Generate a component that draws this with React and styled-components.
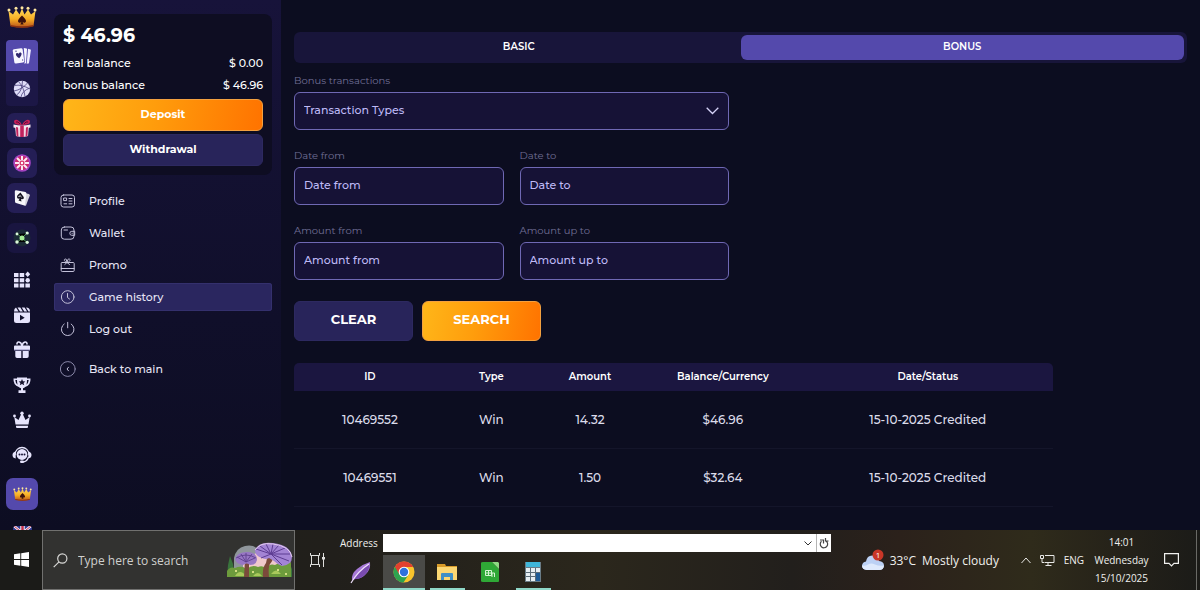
import React from "react";
import styled, { createGlobalStyle, css } from "styled-components";

const PALETTE = {
  page: "#0c0d20",
  rail: "linear-gradient(#17133a, #100f2a 60%, #0d0d22)",
  card: "#0e0d22",
  button: "#28245a",
  accent: "#5449ac",
  field: "#161236",
  fieldBorder: "#6f68b4",
  lilac: "#bfbaf6",
  muted: "#716f96",
  text: "#e6e5f5",
  white: "#ffffff",
};
const FONT = {
  site: 'Montserrat, Inter, "Open Sans", sans-serif',
  system: '"Segoe UI", "Open Sans", "Noto Sans", sans-serif',
};
const ORANGE = "linear-gradient(100deg, #ffb619 0%, #ff9d0c 45%, #ff7300 100%)";

const GlobalStyle = createGlobalStyle`
  * {
    box-sizing: border-box;
  }
  body {
    margin: 0;
    background: ${PALETTE.page};
    font-family: ${FONT.site};
  }
  button, input, select {
    font-family: inherit;
    margin: 0;
  }
  button {
    cursor: pointer;
  }
`;

const ScreenEl = styled.div`
  display: flex;
  flex-direction: column;
  height: 100vh;
`;
const SiteEl = styled.div`
  flex: 1;
  min-height: 0;
  display: flex;
  overflow: hidden;
  color: ${PALETTE.text};
`;

/* Icon rail */
const RailEl = styled.nav`
  flex: none;
  width: 44px;
  padding-top: 6px;
  display: flex;
  flex-direction: column;
  align-items: center;
  background: ${PALETTE.rail};
`;
const LogoEl = styled.a`
  display: flex;
  height: 22px;
  margin-bottom: 12px;
`;
const RailGroupEl = styled.div`
  display: flex;
  flex-direction: column;
  flex: none;
  border-radius: 4px;
  overflow: hidden;
  background: #1c1746;
  margin-bottom: 7px;
`;
const GroupLinkEl = styled.a`
  display: flex;
  align-items: center;
  justify-content: center;
  width: 32px;
  height: ${(props) => (props.$active ? 31 : 35)}px;
  background: ${(props) => (props.$active ? PALETTE.accent : "transparent")};
`;
const TileStackEl = styled.div`
  display: flex;
  flex-direction: column;
  flex: none;
  gap: 5px;
  margin-bottom: 10px;
`;
const TileEl = styled.a`
  flex: none;
  display: flex;
  align-items: center;
  justify-content: center;
  width: ${(props) => (props.$accent ? 32 : 30)}px;
  height: ${(props) => (props.$accent ? 32 : 30)}px;
  border-radius: 7px;
  background: ${(props) =>
    props.$accent ? PALETTE.accent : props.$dim ? "#191540" : "#241e55"};
`;
const RailLinksEl = styled.div`
  flex: none;
  display: flex;
  flex-direction: column;
  padding-bottom: 6px;
  margin-top: -1px;
`;
const RailLinkEl = styled.a`
  display: flex;
  align-items: center;
  justify-content: center;
  width: 32px;
  height: 35px;
`;
const LanguageEl = styled.a`
  flex: none;
  display: flex;
  margin-top: 16px;
`;

/* Account panel */
const PanelEl = styled.aside`
  flex: none;
  width: 237px;
  padding: 14px 9px 0 10px;
  background: ${PALETTE.rail};
`;
const BalanceCardEl = styled.section`
  padding: 10px 9px 9px;
  border-radius: 8px;
  background: ${PALETTE.card};
  color: ${PALETTE.white};
`;
const BalanceTotalEl = styled.div`
  font-size: 19px;
  line-height: 24px;
  font-weight: 700;
  margin-bottom: 4px;
`;
const BalanceRowEl = styled.div`
  display: flex;
  justify-content: space-between;
  font-size: 11px;
  line-height: 22px;
  font-weight: 500;
`;
const CardButtonEl = styled.button`
  display: block;
  width: 100%;
  height: 32px;
  margin-top: 3px;
  padding: 0 0 2px;
  border: 1px solid ${(props) => (props.$primary ? "#f3a040" : "#2d2960")};
  border-radius: 6px;
  background: ${(props) => (props.$primary ? ORANGE : PALETTE.button)};
  color: ${PALETTE.white};
  font-size: 11px;
  font-weight: 700;
`;
const MenuEl = styled.nav`
  display: flex;
  flex-direction: column;
  gap: 4px;
  padding-top: 12px;
`;
const MenuLinkEl = styled.a`
  display: flex;
  align-items: center;
  gap: 13px;
  height: 28px;
  padding: 0 6px;
  border-radius: 3px;
  color: ${PALETTE.text};
  font-size: 11px;
  font-weight: 500;
  text-decoration: none;
  ${(props) =>
    props.$active &&
    css`
      background: #2a265f;
      box-shadow: inset 0 0 0 1px #34306d;
    `}
  ${(props) => props.$spaced && "margin-top: 8px;"}
`;

/* Main column */
const MainEl = styled.main`
  flex: 1;
  min-width: 0;
  padding: 32px 13px 0;
  background: ${PALETTE.page};
`;
const TabsEl = styled.div`
  display: flex;
  height: 31px;
  padding: 3px;
  border-radius: 6px;
  background: #18153a;
  margin-bottom: 11px;
`;
const TabEl = styled.button`
  flex: 1;
  padding: 0 0 2px;
  border: 0;
  border-radius: 6px;
  background: ${(props) => (props.$active ? PALETTE.accent : "transparent")};
  color: ${PALETTE.white};
  font-size: 10px;
  font-weight: 600;
`;
const FormEl = styled.form`
  margin-bottom: 22px;
`;
const FieldGridEl = styled.div`
  display: grid;
  grid-template-columns: 1fr 1fr;
  gap: 19px 16px;
  max-width: 435px;
  margin-bottom: 21px;
`;
const FieldEl = styled.div`
  display: flex;
  flex-direction: column;
  gap: 4px;
  grid-column: ${(props) => (props.$wide ? "1 / -1" : "auto")};
`;
const LabelEl = styled.label`
  color: ${PALETTE.muted};
  font-size: 10px;
  line-height: 14px;
`;
const controlStyle = css`
  width: 100%;
  height: 38px;
  padding: 0 9px 2px;
  border: 1px solid ${PALETTE.fieldBorder};
  border-radius: 6px;
  background: ${PALETTE.field};
  color: ${PALETTE.lilac};
  font-size: 11px;
  font-weight: 500;
  outline: none;
`;
const InputEl = styled.input`
  ${controlStyle}
  &::placeholder {
    color: ${PALETTE.lilac};
    opacity: 1;
  }
`;
const SelectWrapEl = styled.div`
  display: grid;
  align-items: center;

  > * {
    grid-area: 1 / 1;
  }
  > svg {
    justify-self: end;
    margin-right: 10px;
    pointer-events: none;
  }
`;
const SelectEl = styled.select`
  ${controlStyle}
  appearance: none;
`;
const ActionsEl = styled.div`
  display: flex;
  gap: 9px;
`;
const ActionEl = styled.button`
  width: 119px;
  height: 40px;
  padding: 0 0 4px;
  border: 1px solid ${(props) => (props.$primary ? "#f3a040" : "#2d2960")};
  border-radius: 6px;
  background: ${(props) => (props.$primary ? ORANGE : PALETTE.button)};
  color: ${PALETTE.white};
  font-size: 13px;
  font-weight: 700;
`;
const TableEl = styled.table`
  width: 85%;
  table-layout: fixed;
  border-spacing: 0;
  text-align: center;

  th {
    height: 28px;
    padding: 0 0 2px;
    background: #1b1640;
    font-size: 10px;
    font-weight: 600;
    color: ${PALETTE.white};
  }
  th:first-child {
    border-top-left-radius: 5px;
  }
  th:last-child {
    border-top-right-radius: 5px;
  }
  td {
    height: 58px;
    padding: 0;
    border-bottom: 1px solid #14152a;
    font-size: 12px;
    font-weight: 500;
    color: #dcdcea;
  }
`;

/* Desktop taskbar */
const TaskbarEl = styled.footer`
  flex: none;
  display: flex;
  height: 60px;
  background: linear-gradient(
    90deg,
    #1f1f1b 0%,
    #211f1b 28%,
    #2b271c 50%,
    #221f1c 66%,
    #2b211b 75%,
    #2f2b1b 86%,
    #242119 94%,
    #1b1b18 100%
  );
  color: #f0f0ee;
  font-family: ${FONT.system};
`;
const StartEl = styled.button`
  flex: none;
  width: 42px;
  padding: 3px 0 0;
  border: 0;
  background: #1b1b18;
`;
const SearchEl = styled.div`
  flex: none;
  display: flex;
  align-items: center;
  width: 253px;
  padding-left: 10px;
  border: 1px solid #71716f;
  background: #323230;
`;
const SearchInputEl = styled.input`
  flex: 1;
  min-width: 0;
  padding: 0 0 0 10px;
  border: 0;
  outline: none;
  background: transparent;
  color: #d0d0ce;
  font-size: 12px;

  &::placeholder {
    color: #d0d0ce;
    opacity: 1;
  }
`;
const TaskButtonEl = styled.button`
  flex: none;
  display: flex;
  align-items: center;
  justify-content: center;
  width: 45px;
  padding: 0;
  border: 0;
  background: transparent;
`;
const ToolbarsEl = styled.div`
  flex: 1;
  min-width: 0;
  display: flex;
  flex-direction: column;
  padding-top: 4px;
`;
const AddressRowEl = styled.div`
  display: flex;
  align-items: center;
  height: 18px;
  margin-bottom: 3px;
`;
const AddressLabelEl = styled.label`
  flex: none;
  width: 43px;
  font-size: 10px;
  line-height: 18px;
`;
const AddressBoxEl = styled.div`
  flex: 1;
  display: flex;
  height: 18px;
  background: ${PALETTE.white};

  input {
    flex: 1;
    min-width: 0;
    border: 0;
    padding: 0 4px;
    outline: none;
    background: transparent;
  }
  button {
    display: flex;
    align-items: center;
    justify-content: center;
    width: 16px;
    padding: 0;
    border: 0;
    background: transparent;
  }
  button:last-child {
    width: 15px;
    border-left: 1px solid #b5b5b5;
  }
`;
const AppsEl = styled.div`
  flex: 1;
  display: flex;
  gap: 1px;
`;
const AppButtonEl = styled.button`
  display: flex;
  flex-direction: column;
  align-items: center;
  justify-content: space-between;
  width: 42px;
  padding: 5px 0 0;
  border: 0;
  background: ${(props) => (props.$active ? "#4a4a47" : "transparent")};

  &::after {
    content: "";
    width: ${(props) => (props.$active ? 42 : 35)}px;
    height: 2px;
    background: ${(props) => (props.$running ? "#8fd8c8" : "transparent")};
  }
`;
const TrayEl = styled.div`
  flex: none;
  display: flex;
  align-items: center;
  padding-left: 31px;
  border-right: 1px solid #6a6a66;
  margin-right: 3px;
`;
const WeatherEl = styled.div`
  display: flex;
  align-items: center;
  gap: 6px;
  width: 159px;
  font-size: 12px;
  white-space: nowrap;
`;
const TrayIconsEl = styled.div`
  display: flex;
  align-items: center;
  gap: 9px;
  font-size: 10px;
`;
const ClockEl = styled.time`
  width: 75px;
  font-size: 10px;
  line-height: 18px;
  text-align: center;
`;
const NoticeEl = styled.div`
  display: flex;
  justify-content: center;
  width: 24px;
  margin-right: 13px;
`;

/* Drawings */
const CrownIcon = ({ width, height }) => (
  <svg width={width} height={height} viewBox="0 0 30 22" aria-hidden="true">
    <defs>
      <linearGradient id="gold" x1="0" y1="0" x2="0" y2="1">
        <stop offset="0" stopColor="#ffd95c" />
        <stop offset="0.55" stopColor="#f7ae24" />
        <stop offset="1" stopColor="#b9521a" />
      </linearGradient>
    </defs>
    <path
      d="M3.500 20 1.500 5 6 8.500l3-5 3.500 5 2.500-6 2.500 6 3.500-5 3 5L28.500 5l-2 15q-11.500 3-23 0Z"
      fill="url(#gold)"
    />
    <g fill="#ffe7a0">
      <circle cx="2" cy="4" r="1.500" />
      <circle cx="9" cy="2.200" r="1.500" />
      <circle cx="15" cy="1.800" r="1.500" />
      <circle cx="21" cy="2.200" r="1.500" />
      <circle cx="28" cy="4" r="1.500" />
    </g>
    <path d="M3.500 19q11.500 2.500 23 0v1.500q-11.500 2.500-23 0Z" fill="#8a3213" />
    <path
      d="M15 9.500q4 3.500 4 5.500c0 2-2.500 2.500-3.400.8l1 2.700h-3.200l1-2.700c-.9 1.700-3.400 1.200-3.400-.8q0-2 4-5.500Z"
      fill="#3c120d"
    />
  </svg>
);

const CardsIcon = () => (
  <svg width="20" height="20" viewBox="0 0 20 20" aria-hidden="true">
    <rect x="1.500" y="2.500" width="10" height="14.500" rx="1.500" fill="#f7f6ff" transform="rotate(-8 7 10)" />
    <path d="m11.800 2 2.700.4q.6.2.5.8l-1 14-2 .3q1-1 .8-2Z" fill="#f7f6ff" />
    <path d="m16 2.800 2.500.6q.5.200.4.8L17 17q-.2.600-.8.600l-1.500.1Z" fill="#f0eeff" />
    <path d="M7.200 12.300C1.500 8.800 4.600 5.600 6.700 7.800c1.300-2.700 5.500-.6.500 4.500Z" fill="#30276e" />
    <path d="M3.300 5.200h1.400M10 14h1.200" stroke="#3c3483" />
  </svg>
);

const BallIcon = () => (
  <svg width="18" height="18" viewBox="0 0 18 18" aria-hidden="true">
    <circle cx="9" cy="9" r="8.200" fill="#dfddf8" />
    <g fill="none" stroke="#4c447f" strokeWidth="0.800">
      <path d="M1 11Q9 9.500 14.500 3M5.500 1.500q5.500 6 6.500 15M1.800 5.500Q8 4 17 9M3.500 15Q9 12 9.500 1M8 17q1-6 8.800-9" />
    </g>
  </svg>
);

const PresentIcon = () => (
  <svg width="20" height="20" viewBox="0 0 20 20" aria-hidden="true">
    <path d="M3 8h14l-1 10q-6 2-12 0Z" fill="#f1d5e3" />
    <path d="M1.500 6.500q8.500 2 17 0v3q-8.500 2-17 0Z" fill="#f7e6f0" />
    <path d="M8.200 7.500h3.600v11.400H8.200ZM4 9l2 .4.400 9-1.800-.4ZM16 9l-2 .4-.4 9 1.800-.4Z" fill="#c2225d" />
    <path d="M10 7C7 1 2 .5 2 4q0 3 8 3Zm0 0c3-6 8-6.500 8-3q0 3-8 3Z" fill="#c51f58" />
    <path d="M4 4q2-1 4 2M16 4q-2-1-4 2" stroke="#5c0f3a" fill="none" />
  </svg>
);

const WheelIcon = () => (
  <svg width="18" height="18" viewBox="0 0 18 18" aria-hidden="true">
    <circle cx="9" cy="9" r="8.800" fill="#a545c4" />
    <circle cx="9" cy="9" r="7.200" fill="#c92a6c" />
    <g stroke="#fde8f2" strokeWidth="2">
      <path d="M9 2v14M2 9h14M4 4l10 10M14 4 4 14" />
    </g>
    <circle cx="9" cy="9" r="2.500" fill="#d9346a" />
    <circle cx="9" cy="9" r="1.200" fill="#fff" />
  </svg>
);

const SpadeCardIcon = () => (
  <svg width="18" height="18" viewBox="0 0 18 18" aria-hidden="true">
    <path d="m6 3 10 2q1 .5.800 1.500L13 16.500q-1 .5-2 0Z" fill="#d5d4de" />
    <path d="M3 1.200 12.500 3q1 .5 1 1.500L12 15.500q-.5 1-1.500.8L3 14q-1-.5-1-1.500l-.2-10q.2-1.200 1.200-1.300Z" fill="#f8f8fb" />
    <path d="M7.500 3.500 10.700 8q.6 2.300-1.800 2.200L8 10l.5 2.500-3-.9 1.200-2q-3 .4-2.700-1.800Q4.200 6 5.500 5.300Z" fill="#171522" />
    <path d="M5.500 7.500q2-1.500 3 .5" stroke="#f8f8fb" fill="none" />
  </svg>
);

const NetworkNodesIcon = () => (
  <svg width="18" height="18" viewBox="0 0 18 18" aria-hidden="true">
    <circle cx="9" cy="9" r="8.500" fill="#1b2a36" />
    <path d="M4.500 5 9 9l4.500-4.500M4.500 13 9 9l4.500 4" stroke="#4c9a58" />
    <circle cx="9" cy="9" r="2.500" fill="#a5ef96" />
    <g fill="#dcf8da">
      <circle cx="4" cy="5" r="1.400" />
      <circle cx="14.200" cy="4" r="1.600" />
      <circle cx="4" cy="13" r="1.700" />
      <circle cx="14.200" cy="13.300" r="1.600" />
    </g>
  </svg>
);

const RailIcon = ({ children }) => (
  <svg width="20" height="20" viewBox="0 0 20 20" fill="#e6e4fc" aria-hidden="true">
    {children}
  </svg>
);

const GridIcon = () => (
  <RailIcon>
    <path d="M2 3h4.500v4H2zM7.700 3h4.500v4H7.700zM2 8.200h4.500v4H2zM7.700 8.200h4.500v4H7.700zM2 13.400h4.500v4H2zM7.700 13.400h4.500v4H7.700zM13.400 13.400h4.500v4h-4.500zM15.700 1.500l2.500 2.800-2.500 2.800-2.500-2.800z" />
    <circle cx="15.700" cy="10.200" r="2.200" />
  </RailIcon>
);

const ClapperIcon = () => (
  <RailIcon>
    <path
      fillRule="evenodd"
      d="M2 7.500h16v8q0 2.500-2.500 2.500h-11Q2 18 2 15.500Zm6 2.300v5.700l4.700-2.800Z"
    />
    <path d="M2 6.500q0-3 2-3.900l2.500 3.900ZM5.500 2.500h2.800l2.500 4H8ZM9.800 2.500h2.800l2.500 4h-2.800ZM14 2.500q4 0 4 4h-1.500Z" />
  </RailIcon>
);

const GiftIcon = () => (
  <RailIcon>
    <path d="M3 5.500h14q1 0 1 1V10H2V6.500q0-1 1-1ZM3.300 11h6v7H5q-1.700 0-1.700-1.700ZM10.700 11h6v5.300q0 1.700-1.700 1.700h-4.300Z" />
    <path
      d="M10 6C9 1 4.500 1 5 4.500M10 6C11 1 15.500 1 15 4.500"
      fill="none"
      stroke="#e6e4fc"
      strokeWidth="1.600"
    />
    <path d="M2 9.500h16v1H2Z" fill="#8d89ba" />
  </RailIcon>
);

const TrophyIcon = () => (
  <RailIcon>
    <path
      fillRule="evenodd"
      d="M5 2.500h10v1h3.500q.5 6.500-5.300 8.500-.8 1-2.200 1.300v2h2.500V18h-7v-2.700H9v-2q-1.400-.3-2.200-1.300Q1 10 1.500 3.500H5ZM5 5H3.300q.2 3.500 2.400 4.700Q5 8 5 5Zm10 0q0 3-.7 4.700Q16.500 8.500 16.700 5Z"
    />
    <path d="m10 4 1 2.200 2.400.2-1.800 1.500.6 2.400L10 9l-2.200 1.300.6-2.400-1.800-1.500L9 6.200Z" fill="#17142f" />
  </RailIcon>
);

const VipIcon = () => (
  <RailIcon>
    <path d="M3.500 14.500 2.300 7l4.200 3L9.300 4h1.400l2.800 6 4.200-3-1.200 7.500ZM4 15.700h12v1q0 1.300-1 1.300H5q-1 0-1-1.300Z" />
    <circle cx="2.500" cy="6" r="1.400" />
    <circle cx="10" cy="3.200" r="1.700" />
    <circle cx="17.500" cy="6" r="1.400" />
  </RailIcon>
);

const SupportIcon = () => (
  <RailIcon>
    <circle cx="10" cy="9.500" r="5.400" />
    <path
      d="M3 10C3 0 17 0 17 10M16.500 12q-1.500 5-6 5"
      fill="none"
      stroke="#e6e4fc"
      strokeWidth="1.300"
    />
    <path d="M3.700 6.500v7Q.5 13 .5 10t3.200-3.500ZM16.300 6.500v7q3.200-.5 3.200-3.500t-3.200-3.500Z" />
    <rect x="8" y="15.500" width="4" height="2.500" rx="1.200" />
    <g fill="#1a1738">
      <circle cx="7.500" cy="9.500" r="1" />
      <circle cx="10" cy="9.500" r="1" />
      <circle cx="12.500" cy="9.500" r="1" />
    </g>
  </RailIcon>
);

const FlagIcon = () => (
  <svg width="19" height="14" viewBox="0 0 19 14" aria-hidden="true">
    <clipPath id="flag">
      <rect width="19" height="14" rx="3" />
    </clipPath>
    <g clipPath="url(#flag)">
      <rect width="19" height="14" fill="#303a8f" />
      <path d="m1 0 17 14M18 0 1 14" stroke="#f2edf8" strokeWidth="2.600" />
      <path d="m1 0 17 14M18 0 1 14" stroke="#c5304d" />
      <path d="M9.500 0v14M0 7h19" stroke="#f2edf8" strokeWidth="4.500" />
      <path d="M9.500 0v14M0 7h19" stroke="#c5304d" strokeWidth="2.500" />
    </g>
  </svg>
);

const MenuIcon = ({ children }) => (
  <svg
    width="16"
    height="16"
    viewBox="0 0 16 16"
    fill="none"
    stroke="#c3c1d9"
    strokeLinecap="round"
    strokeLinejoin="round"
    aria-hidden="true"
  >
    {children}
  </svg>
);

const ProfileIcon = () => (
  <MenuIcon>
    <rect x="1" y="2" width="13.500" height="12" rx="2.500" />
    <rect x="4" y="5" width="2.600" height="2.600" />
    <path d="M9 5.500h3M9 8h3M4 10.800h2.700M9 10.800h3" />
  </MenuIcon>
);

const WalletIcon = () => (
  <MenuIcon>
    <rect x="1.300" y="2" width="12.700" height="12.200" rx="3" />
    <path d="M4 5h3.500M14.300 6.300h-2.500q-2 0-2 2t2 2h2.500ZM12 8.300h.3" />
  </MenuIcon>
);

const PromoIcon = () => (
  <MenuIcon>
    <rect x="1.200" y="5.500" width="13" height="9" rx="1" />
    <path d="M1.200 11.500h13M7 5.500 4.800 7.500M7 5.500l2.500 2M7 5.500C3 4.500 4 1 6.300 2.300L7 5.500l1-3.200c2.300-1.300 3.800 2.200-1 3.200" />
  </MenuIcon>
);

const HistoryIcon = () => (
  <MenuIcon>
    <circle cx="7.700" cy="8" r="6.300" />
    <path d="M7.500 4.500v4l2 1.500" />
  </MenuIcon>
);

const LogoutIcon = () => (
  <MenuIcon>
    <path d="M4.200 3a6.300 6.300 0 1 0 7 0M7.700 1.300v5.500" />
  </MenuIcon>
);

const BackIcon = () => (
  <MenuIcon>
    <circle cx="7.800" cy="8" r="7.400" stroke="#8987a8" />
    <path d="M8.500 6.200 7 8l1.500 1.800" />
  </MenuIcon>
);

const ChevronIcon = () => (
  <svg width="13" height="8" viewBox="0 0 13 8" fill="none" stroke="#d5d2f7" strokeWidth="1.300" aria-hidden="true">
    <path d="m.7.8 5.800 5.700L12.300.8" />
  </svg>
);

const WindowsIcon = () => (
  <svg width="15" height="15" viewBox="0 0 15 15" fill="#fff" aria-hidden="true">
    <path d="M0 2.200 6.300 1.300V7H0ZM7.200 1.200 15 0v7H7.200ZM0 8h6.300v5.700L0 12.800ZM7.200 8H15v7l-7.800-1.200Z" />
  </svg>
);

const MagnifierIcon = () => (
  <svg width="15" height="15" viewBox="0 0 15 15" fill="none" stroke="#d8d8d6" strokeWidth="1.200" aria-hidden="true">
    <circle cx="9.300" cy="5.500" r="4.600" />
    <path d="M6 8.900.7 14.200" />
  </svg>
);

const MushroomsIcon = () => (
  <svg width="67" height="36" viewBox="0 0 67 36" aria-hidden="true">
    <path d="M7 32V16Q9 6 18 4q10-2 14 5l-3 12-14 11Z" fill="#8f969b" />
    <path d="M16 34V22q10-12 22-14l24 8q4 10 0 18Z" fill="#efc9cc" />
    <path d="m0 35 1-12 2-9 3 8 2 13ZM60 35l1-16 4 8v8Z" fill="#39733c" />
    <path d="M0 35v-6q3-5 8-3 4-2 8-1l4 2q5-5 11-2 4-2 8 1 4-5 9-3 4-3 8-1 4-4 8-1v14Z" fill="#6d9b3c" />
    <path d="M8 34q5-8 11 0ZM44 32q5-7 10 0ZM26 34q5-6 9 0Z" fill="#a9c95b" />
    <path d="M18 18h4v17h-5ZM41 12h6q0 5-4 10-2 3-1 13h-6q-1-9 3-14Z" fill="#7b4a3b" />
    <path d="M8 17Q10 10 20 10t10 8q-1 5-7 5-3-3-7 0-7-1-8-6Z" fill="#9877c4" />
    <path d="M9 16q10-6 20 0M19 20l-9-5m9 5-5-8m5 8 0-9m0 9 6-8m-6 8 9-4" fill="none" stroke="#5f3f8d" strokeWidth="0.900" />
    <path d="M28 8Q32-1 46 1q18 2 19 14 0 8-10 9-4-1-8-5l-5-3q-3 2-7 0-7-2-7-8Z" fill="#a384d4" />
    <path d="m44 12-15-5m15 5L33 4m11 8-5-10m5 10 2-10m-2 10 8-9m-8 9 14-6m-14 6 19 0m-19 0 18 7m-18-7 11 11m-11-11-10 4" stroke="#5d3c92" />
    <path d="M28 8q5-8 18-6 17 2 19 13" fill="none" stroke="#e2c9ec" />
    <g fill="#f6f29a">
      <circle cx="9" cy="29" r="1" />
      <circle cx="26" cy="30" r="1" />
      <circle cx="51" cy="28" r="1" />
      <circle cx="59" cy="32" r="1" />
    </g>
  </svg>
);

const TaskViewIcon = () => (
  <svg width="16" height="14" viewBox="0 0 16 14" fill="none" stroke="#dededc" aria-hidden="true">
    <path d="M.5 0v2.500h9V0M.5 14v-2.500h9V14M1.500 2.500v9M8.500 2.500v9M13.500 0v14" />
    <rect x="12" y="4" width="3" height="2.500" fill="#dededc" stroke="none" />
  </svg>
);

const FeatherIcon = () => (
  <svg width="22" height="24" viewBox="0 0 22 24" aria-hidden="true">
    <path d="M2 20Q1 14 7 9t13-7q1 8-5 13-4 4-10 4Z" fill="#a678d6" />
    <path d="M4 20Q9 11 19.500 4q0 7-5 11-4 4-9 4Z" fill="#7a4bb0" />
    <path d="M1 23Q8 11 19 4" stroke="#efe0fb" fill="none" strokeWidth="1.200" />
  </svg>
);

const ChromeIcon = () => (
  <svg width="22" height="24" viewBox="0 0 22 24" aria-hidden="true">
    <circle cx="11" cy="12" r="10.500" fill="#f8c32c" />
    <path d="M11 12 1.900 6.700A10.500 10.500 0 0 0 10.500 22.500L15.600 14.600Z" fill="#2ea44f" />
    <path d="M1.900 6.700A10.500 10.500 0 0 1 20.200 6.900H11L6.400 14.600Z" fill="#e2402f" />
    <circle cx="11" cy="12" r="5.300" fill="#fff" />
    <circle cx="11" cy="12" r="4.200" fill="#2f71dd" />
  </svg>
);

const FolderIcon = () => (
  <svg width="20" height="24" viewBox="0 0 20 24" aria-hidden="true">
    <path d="M0 4h8l1 2h11v5H0Z" fill="#d89b29" />
    <path d="M0 7h20v13H0Z" fill="#fbd773" />
    <path d="M4 14q0-1 1-1h10q1 0 1 1v6h-3v-3H7v3H4Z" fill="#3f8fc6" />
  </svg>
);

const SheetIcon = () => (
  <svg width="18" height="24" viewBox="0 0 18 24" aria-hidden="true">
    <path d="M2 2h9l7 7v12q0 1-1 1H2q-2 0-2-1V3q0-1 2-1Z" fill="#2fa836" />
    <path d="M11 2h6l1 1v6Z" fill="#8edb82" />
    <path d="M4.500 10.500h6v5h-6ZM4.500 13h6M7.500 10.500v5M11 17v-4h2.500v4" fill="none" stroke="#d5f5d2" />
  </svg>
);

const CalculatorIcon = () => (
  <svg width="16" height="24" viewBox="0 0 16 24" aria-hidden="true">
    <path d="M0 2h16v20H0Z" fill="#6a7c86" />
    <path d="M1 2h14v5H1Z" fill="#3fb6d9" />
    <path d="M1 8h14v13H1Z" fill="#e6eef2" />
    <path d="M11 13h4v8h-4Z" fill="#1d5b96" />
    <path d="M1 12.500h14M1 16.500h10M5.500 8v13M10.500 8v13" stroke="#5a6c78" />
  </svg>
);

const CloudIcon = () => (
  <svg width="22" height="22" viewBox="0 0 22 22" aria-hidden="true">
    <path d="M5 21q-5-.5-5-4.500Q.500 13 4 12.500 5 6 11 6.500q5 .5 6 5.500 5 .5 5 4.500-.5 4.500-5 4.500Z" fill="#bcd0f4" />
    <path d="M5 21q-5-.5-5-4.500 3 1 6-1t7 0 9 1q-.5 4.500-5 4.500Z" fill="#dfe9fc" />
    <circle cx="16" cy="6" r="5.500" fill="#c93627" />
    <text x="16" y="9" fill="#fff" fontSize="8" textAnchor="middle">1</text>
  </svg>
);

const CaretUpIcon = () => (
  <svg width="10" height="7" viewBox="0 0 10 7" fill="none" stroke="#e8e8e6" aria-hidden="true">
    <path d="m.5 6 4.500-5L9.500 6" />
  </svg>
);

const LanIcon = () => (
  <svg width="15" height="13" viewBox="0 0 15 13" fill="none" stroke="#e8e8e6" aria-hidden="true">
    <path d="M5 1.500h9v7H4.500M8 8.500v3M5.500 11.500h6M.5 1.500h3v3h-3ZM2 4.500v4h2" />
  </svg>
);

const NoticeIcon = () => (
  <svg width="15" height="14" viewBox="0 0 15 14" fill="none" stroke="#f0f0ee" strokeWidth="1.200" aria-hidden="true">
    <path d="M.6.6h13.800v9.800H10l-2.500 2.500L5 10.400H.6Z" />
  </svg>
);

const RAIL_TILES = [
  { name: "Bonuses", icon: PresentIcon },
  { name: "Fortune wheel", icon: WheelIcon },
  { name: "Card games", icon: SpadeCardIcon },
];
const RAIL_LINKS = [
  { name: "All games", icon: GridIcon },
  { name: "Live", icon: ClapperIcon },
  { name: "Gifts", icon: GiftIcon },
  { name: "Tournaments", icon: TrophyIcon },
  { name: "VIP", icon: VipIcon },
  { name: "Support", icon: SupportIcon },
];
const MENU = [
  { name: "Profile", icon: ProfileIcon },
  { name: "Wallet", icon: WalletIcon },
  { name: "Promo", icon: PromoIcon },
  { name: "Game history", icon: HistoryIcon, active: true },
  { name: "Log out", icon: LogoutIcon },
  { name: "Back to main", icon: BackIcon, spaced: true },
];
const FIELDS = ["Date from", "Date to", "Amount from", "Amount up to"];
const COLUMNS = [
  { name: "ID", width: "20%" },
  { name: "Type", width: "12%" },
  { name: "Amount", width: "14%" },
  { name: "Balance/Currency", width: "21%" },
  { name: "Date/Status", width: "33%" },
];
const ROWS = [
  ["10469552", "Win", "14.32", "$46.96", "15-10-2025 Credited"],
  ["10469551", "Win", "1.50", "$32.64", "15-10-2025 Credited"],
];

const Rail = () => (
  <RailEl aria-label="Sections">
    <LogoEl href="#" aria-label="Home">
      <CrownIcon width={30} height={22} />
    </LogoEl>
    <RailGroupEl>
      <GroupLinkEl href="#" aria-label="Casino" $active>
        <CardsIcon />
      </GroupLinkEl>
      <GroupLinkEl href="#" aria-label="Sport">
        <BallIcon />
      </GroupLinkEl>
    </RailGroupEl>
    <TileStackEl>
      {RAIL_TILES.map(({ name, icon: Icon }) => (
        <TileEl key={name} href="#" aria-label={name}>
          <Icon />
        </TileEl>
      ))}
    </TileStackEl>
    <TileStackEl>
      <TileEl href="#" aria-label="Community" $dim>
        <NetworkNodesIcon />
      </TileEl>
    </TileStackEl>
    <RailLinksEl>
      {RAIL_LINKS.map(({ name, icon: Icon }) => (
        <RailLinkEl key={name} href="#" aria-label={name}>
          <Icon />
        </RailLinkEl>
      ))}
    </RailLinksEl>
    <TileEl href="#" aria-label="Club" $accent>
      <CrownIcon width={19} height={14} />
    </TileEl>
    <LanguageEl href="#" aria-label="English">
      <FlagIcon />
    </LanguageEl>
  </RailEl>
);

const AccountPanel = () => (
  <PanelEl>
    <BalanceCardEl>
      <BalanceTotalEl>$ 46.96</BalanceTotalEl>
      <BalanceRowEl>
        <span>real balance</span>
        <span>$ 0.00</span>
      </BalanceRowEl>
      <BalanceRowEl>
        <span>bonus balance</span>
        <span>$ 46.96</span>
      </BalanceRowEl>
      <CardButtonEl type="button" $primary>
        Deposit
      </CardButtonEl>
      <CardButtonEl type="button">Withdrawal</CardButtonEl>
    </BalanceCardEl>
    <MenuEl aria-label="Account">
      {MENU.map(({ name, icon: Icon, active, spaced }) => (
        <MenuLinkEl key={name} href="#" $active={active} $spaced={spaced}>
          <Icon />
          {name}
        </MenuLinkEl>
      ))}
    </MenuEl>
  </PanelEl>
);

const HistoryForm = () => (
  <FormEl onSubmit={(e) => e.preventDefault()}>
    <FieldGridEl>
      <FieldEl $wide>
        <LabelEl htmlFor="types">Bonus transactions</LabelEl>
        <SelectWrapEl>
          <SelectEl id="types">
            <option>Transaction Types</option>
          </SelectEl>
          <ChevronIcon />
        </SelectWrapEl>
      </FieldEl>
      {FIELDS.map((name) => {
        const id = name.toLowerCase().replace(/ /g, "-");
        return (
          <FieldEl key={id}>
            <LabelEl htmlFor={id}>{name}</LabelEl>
            <InputEl id={id} placeholder={name} />
          </FieldEl>
        );
      })}
    </FieldGridEl>
    <ActionsEl>
      <ActionEl type="reset">CLEAR</ActionEl>
      <ActionEl type="submit" $primary>
        SEARCH
      </ActionEl>
    </ActionsEl>
  </FormEl>
);

const HistoryTable = () => (
  <TableEl>
    <colgroup>
      {COLUMNS.map(({ name, width }) => (
        <col key={name} width={width} />
      ))}
    </colgroup>
    <thead>
      <tr>
        {COLUMNS.map(({ name }) => (
          <th key={name} scope="col">
            {name}
          </th>
        ))}
      </tr>
    </thead>
    <tbody>
      {ROWS.map((row) => (
        <tr key={row[0]}>
          {row.map((cell) => (
            <td key={cell}>{cell}</td>
          ))}
        </tr>
      ))}
    </tbody>
  </TableEl>
);

const Taskbar = () => (
  <TaskbarEl>
    <StartEl type="button" aria-label="Start">
      <WindowsIcon />
    </StartEl>
    <SearchEl>
      <MagnifierIcon />
      <SearchInputEl aria-label="Search" placeholder="Type here to search" />
      <MushroomsIcon />
    </SearchEl>
    <TaskButtonEl type="button" aria-label="Task view">
      <TaskViewIcon />
    </TaskButtonEl>
    <ToolbarsEl>
      <AddressRowEl>
        <AddressLabelEl htmlFor="address">Address</AddressLabelEl>
        <AddressBoxEl>
          <input id="address" />
          <button type="button" aria-label="Show addresses">
            <svg width="8" height="5" viewBox="0 0 8 5" fill="none" stroke="#333">
              <path d="m.5.5 3.500 3.500L7.500.5" />
            </svg>
          </button>
          <button type="button" aria-label="Refresh">
            <svg width="10" height="11" viewBox="0 0 10 11" fill="none" stroke="#444" strokeWidth="1.200">
              <path d="M7 3a3.700 3.700 0 1 1-4.500.3M1 2h3.500v3.500M9.500 3H6.500V0" />
            </svg>
          </button>
        </AddressBoxEl>
      </AddressRowEl>
      <AppsEl>
        <AppButtonEl type="button" aria-label="Notes">
          <FeatherIcon />
        </AppButtonEl>
        <AppButtonEl type="button" aria-label="Chrome" $active $running>
          <ChromeIcon />
        </AppButtonEl>
        <AppButtonEl type="button" aria-label="File Explorer" $running>
          <FolderIcon />
        </AppButtonEl>
        <AppButtonEl type="button" aria-label="Spreadsheet">
          <SheetIcon />
        </AppButtonEl>
        <AppButtonEl type="button" aria-label="Calculator" $running>
          <CalculatorIcon />
        </AppButtonEl>
      </AppsEl>
    </ToolbarsEl>
    <TrayEl>
      <WeatherEl>
        <CloudIcon />
        <span>33°C</span>
        <span>Mostly cloudy</span>
      </WeatherEl>
      <TrayIconsEl>
        <CaretUpIcon />
        <LanIcon />
        <span>ENG</span>
      </TrayIconsEl>
      <ClockEl>
        14:01
        <br />
        Wednesday
        <br />
        15/10/2025
      </ClockEl>
      <NoticeEl>
        <NoticeIcon />
      </NoticeEl>
    </TrayEl>
  </TaskbarEl>
);

const App = () => (
  <>
    <GlobalStyle />
    <ScreenEl>
      <SiteEl>
        <Rail />
        <AccountPanel />
        <MainEl>
          <TabsEl role="tablist">
            <TabEl type="button" role="tab" aria-selected="false">
              BASIC
            </TabEl>
            <TabEl type="button" role="tab" aria-selected="true" $active>
              BONUS
            </TabEl>
          </TabsEl>
          <HistoryForm />
          <HistoryTable />
        </MainEl>
      </SiteEl>
      <Taskbar />
    </ScreenEl>
  </>
);

export default App;
